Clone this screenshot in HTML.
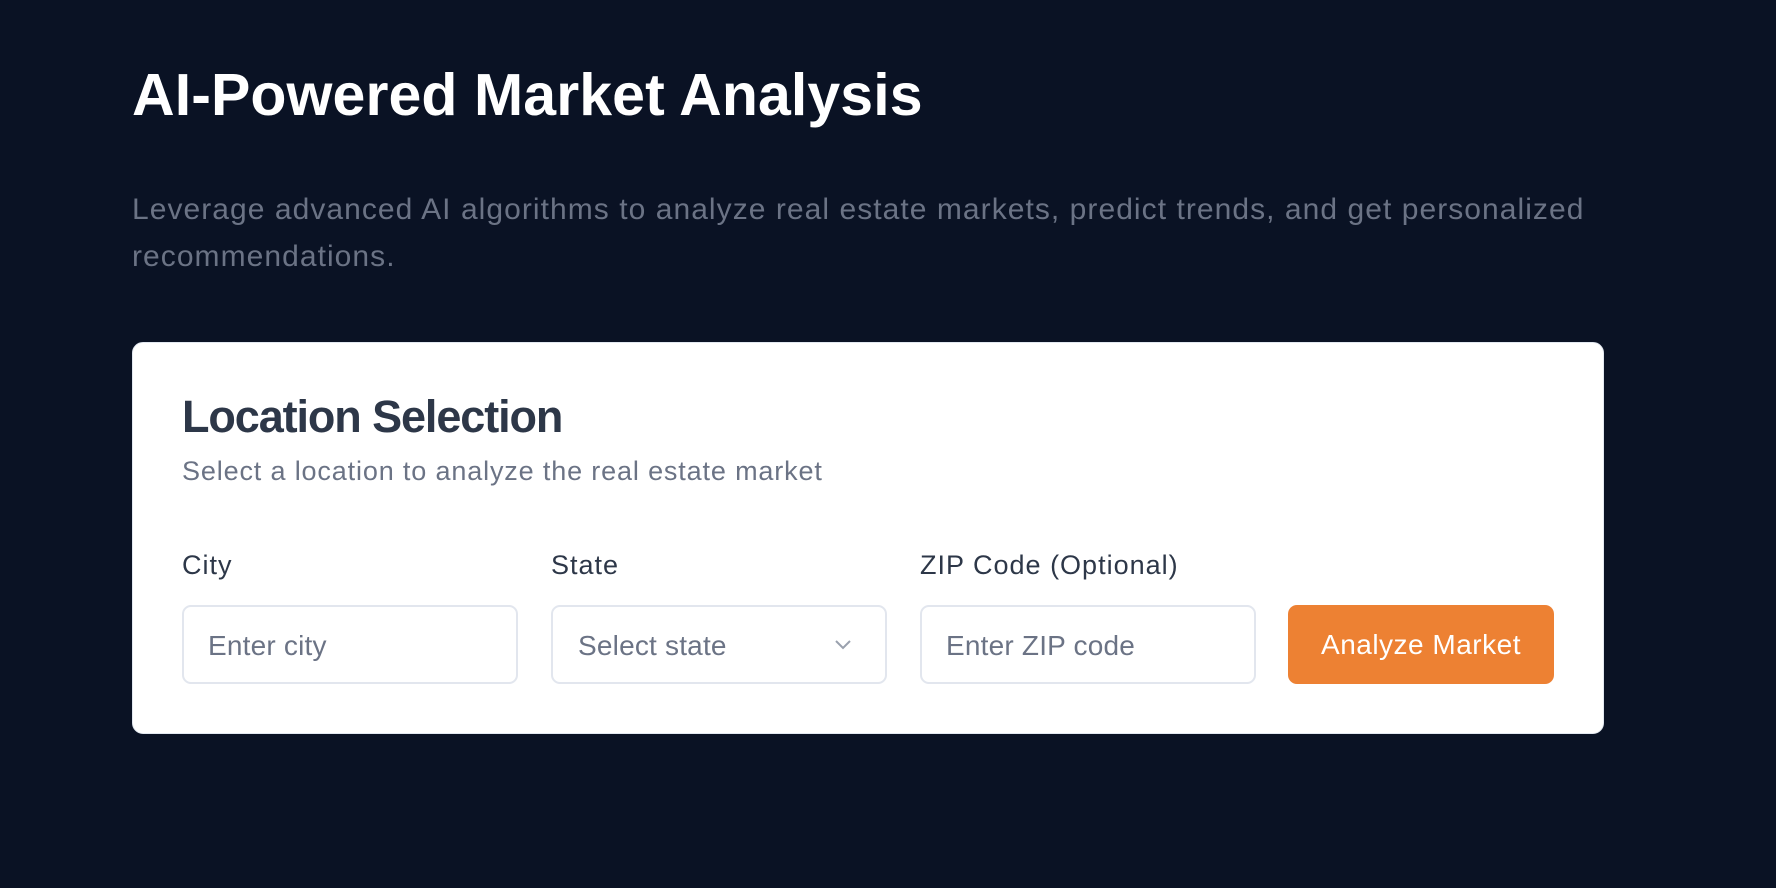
<!DOCTYPE html>
<html><head><meta charset="utf-8"><style>
*{box-sizing:border-box;margin:0;padding:0}
body{width:1776px;height:888px;background:#0a1224;font-family:"Liberation Sans",sans-serif;position:relative;overflow:hidden}
.t{position:absolute;left:132px;top:61px;color:#fff;font-weight:bold;font-size:59px;letter-spacing:.1px;white-space:nowrap}
.p{position:absolute;left:132px;top:186px;width:1560px;color:#6b7385;font-size:30px;line-height:47px;letter-spacing:1.05px}
.card{position:absolute;left:132px;top:342px;width:1472px;height:392px;background:#fff;border-radius:11px;border:1px solid #e2e8f0}
.h{position:absolute;left:49px;top:48px;font-size:45px;font-weight:bold;color:#2d3748;letter-spacing:-1.1px}
.s{position:absolute;left:49px;top:113px;font-size:27px;color:#6b7385;letter-spacing:.85px}
.l{position:absolute;top:207px;font-size:27px;color:#2d3748;letter-spacing:1px}
.in{position:absolute;top:262px;width:336px;height:79px;border:2px solid #e2e6ee;border-radius:9px;font-size:28px;color:#6b7385;padding:23px 0 0 24px;letter-spacing:.2px}
.btn{position:absolute;top:262px;left:1155px;width:266px;height:79px;background:#ed8133;border-radius:9px;color:#fff;font-size:28px;text-align:center;line-height:79px;letter-spacing:.5px}
</style></head><body>
<div class="t">AI-Powered Market Analysis</div>
<div class="p">Leverage advanced AI algorithms to analyze real estate markets, predict trends, and get personalized<br>recommendations.</div>
<div class="card">
<div class="h">Location Selection</div>
<div class="s">Select a location to analyze the real estate market</div>
<div class="l" style="left:49px">City</div>
<div class="l" style="left:418px">State</div>
<div class="l" style="left:787px">ZIP Code (Optional)</div>
<div class="in" style="left:49px">Enter city</div>
<div class="in" style="left:418px;padding-left:25px">Select state
<svg style="position:absolute;left:280px;top:30px" width="20" height="14" viewBox="0 0 20 14"><path d="M3 4l7 7 7-7" fill="none" stroke="#9aa1ae" stroke-width="2"/></svg></div>
<div class="in" style="left:787px">Enter ZIP code</div>
<div class="btn">Analyze Market</div>
</div>
</body></html>
